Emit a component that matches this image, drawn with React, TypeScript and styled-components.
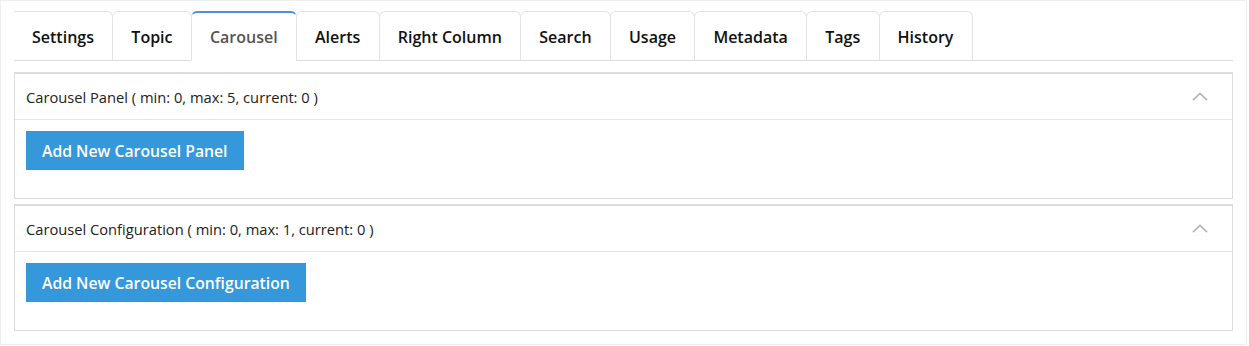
import * as React from "react";
import styled, { createGlobalStyle } from "styled-components";

const GlobalStyle = createGlobalStyle`
  html, body {
    margin: 0;
    padding: 0;
    background: #ffffff;
    font-family: "Open Sans", "Liberation Sans", Arial, sans-serif;
  }
`;

const Frame = styled.div`
  box-sizing: border-box;
  width: 1247px;
  height: 345px;
  border: 1px solid #efefef;
  padding: 10px 13px 0 13px;
`;

const TabBar = styled.ul`
  display: flex;
  margin: 0;
  padding: 0;
  list-style: none;
  border-bottom: 1px solid #dddddd;
  height: 49px;
`;

const Tab = styled.li<{ $active?: boolean; $first?: boolean }>`
  box-sizing: border-box;
  height: 50px;
  display: flex;
  align-items: center;
  padding: 0 18.4px 0 18px;
  font-size: 16px;
  font-weight: 600;
  color: ${(p) => (p.$active ? "#555555" : "#111111")};
  background: #ffffff;
  border: 1px solid #e3e3e3;
  border-left: ${(p) => (p.$first ? "none" : "1px solid #e3e3e3")};
  border-bottom: ${(p) => (p.$active ? "1px solid #ffffff" : "1px solid #dddddd")};
  border-top: ${(p) => (p.$active ? "2px solid #4a90e2" : "1px solid #e3e3e3")};
  border-radius: ${(p) => (p.$first ? "0 6px 0 0" : "6px 6px 0 0")};
  margin-left: ${(p) => (p.$first ? "0" : "-1px")};
  padding-top: ${(p) => (p.$active ? "0" : "1px")};
  cursor: pointer;
  white-space: nowrap;
`;

const Panels = styled.div`
  display: flex;
  flex-direction: column;
  gap: 5px;
  margin-top: 11px;
`;

const Panel = styled.section`
  border: 1px solid #dddddd;
  border-top: 2px solid #dddddd;
  background: #ffffff;
`;

const PanelHeader = styled.div`
  display: flex;
  align-items: center;
  justify-content: space-between;
  height: 45px;
  padding: 0 24px 0 11px;
  border-bottom: 1px solid #e6e6e6;
  font-size: 14.7px;
  color: #222222;
`;

const PanelBody = styled.div`
  padding: 11px 11px 28px 11px;
`;

const AddButton = styled.button`
  height: 39px;
  padding: 0 16px;
  border: none;
  border-radius: 0;
  background: #3498db;
  color: #ffffff;
  font-family: "Open Sans", "Liberation Sans", Arial, sans-serif;
  font-size: 15.75px;
  font-weight: 600;
  cursor: pointer;
`;

const Chevron = () => (
  <svg width="16" height="9" viewBox="0 0 16 9" fill="none">
    <path d="M1 8.2 L8 1.5 L15 8.2" stroke="#b5b5b5" strokeWidth="1.7" />
  </svg>
);

const tabs = [
  "Settings",
  "Topic",
  "Carousel",
  "Alerts",
  "Right Column",
  "Search",
  "Usage",
  "Metadata",
  "Tags",
  "History",
];

const panels = [
  { title: "Carousel Panel ( min: 0, max: 5, current: 0 )", action: "Add New Carousel Panel" },
  {
    title: "Carousel Configuration ( min: 0, max: 1, current: 0 )",
    action: "Add New Carousel Configuration",
  },
];

const App: React.FC = () => {
  return (
    <>
      <GlobalStyle />
      <Frame>
        <TabBar>
          {tabs.map((t, i) => (
            <Tab key={t} $first={i === 0} $active={t === "Carousel"}>
              {t}
            </Tab>
          ))}
        </TabBar>
        <Panels>
          {panels.map((p) => (
            <Panel key={p.title}>
              <PanelHeader>
                <span>{p.title}</span>
                <Chevron />
              </PanelHeader>
              <PanelBody>
                <AddButton>{p.action}</AddButton>
              </PanelBody>
            </Panel>
          ))}
        </Panels>
      </Frame>
    </>
  );
};

export default App;
